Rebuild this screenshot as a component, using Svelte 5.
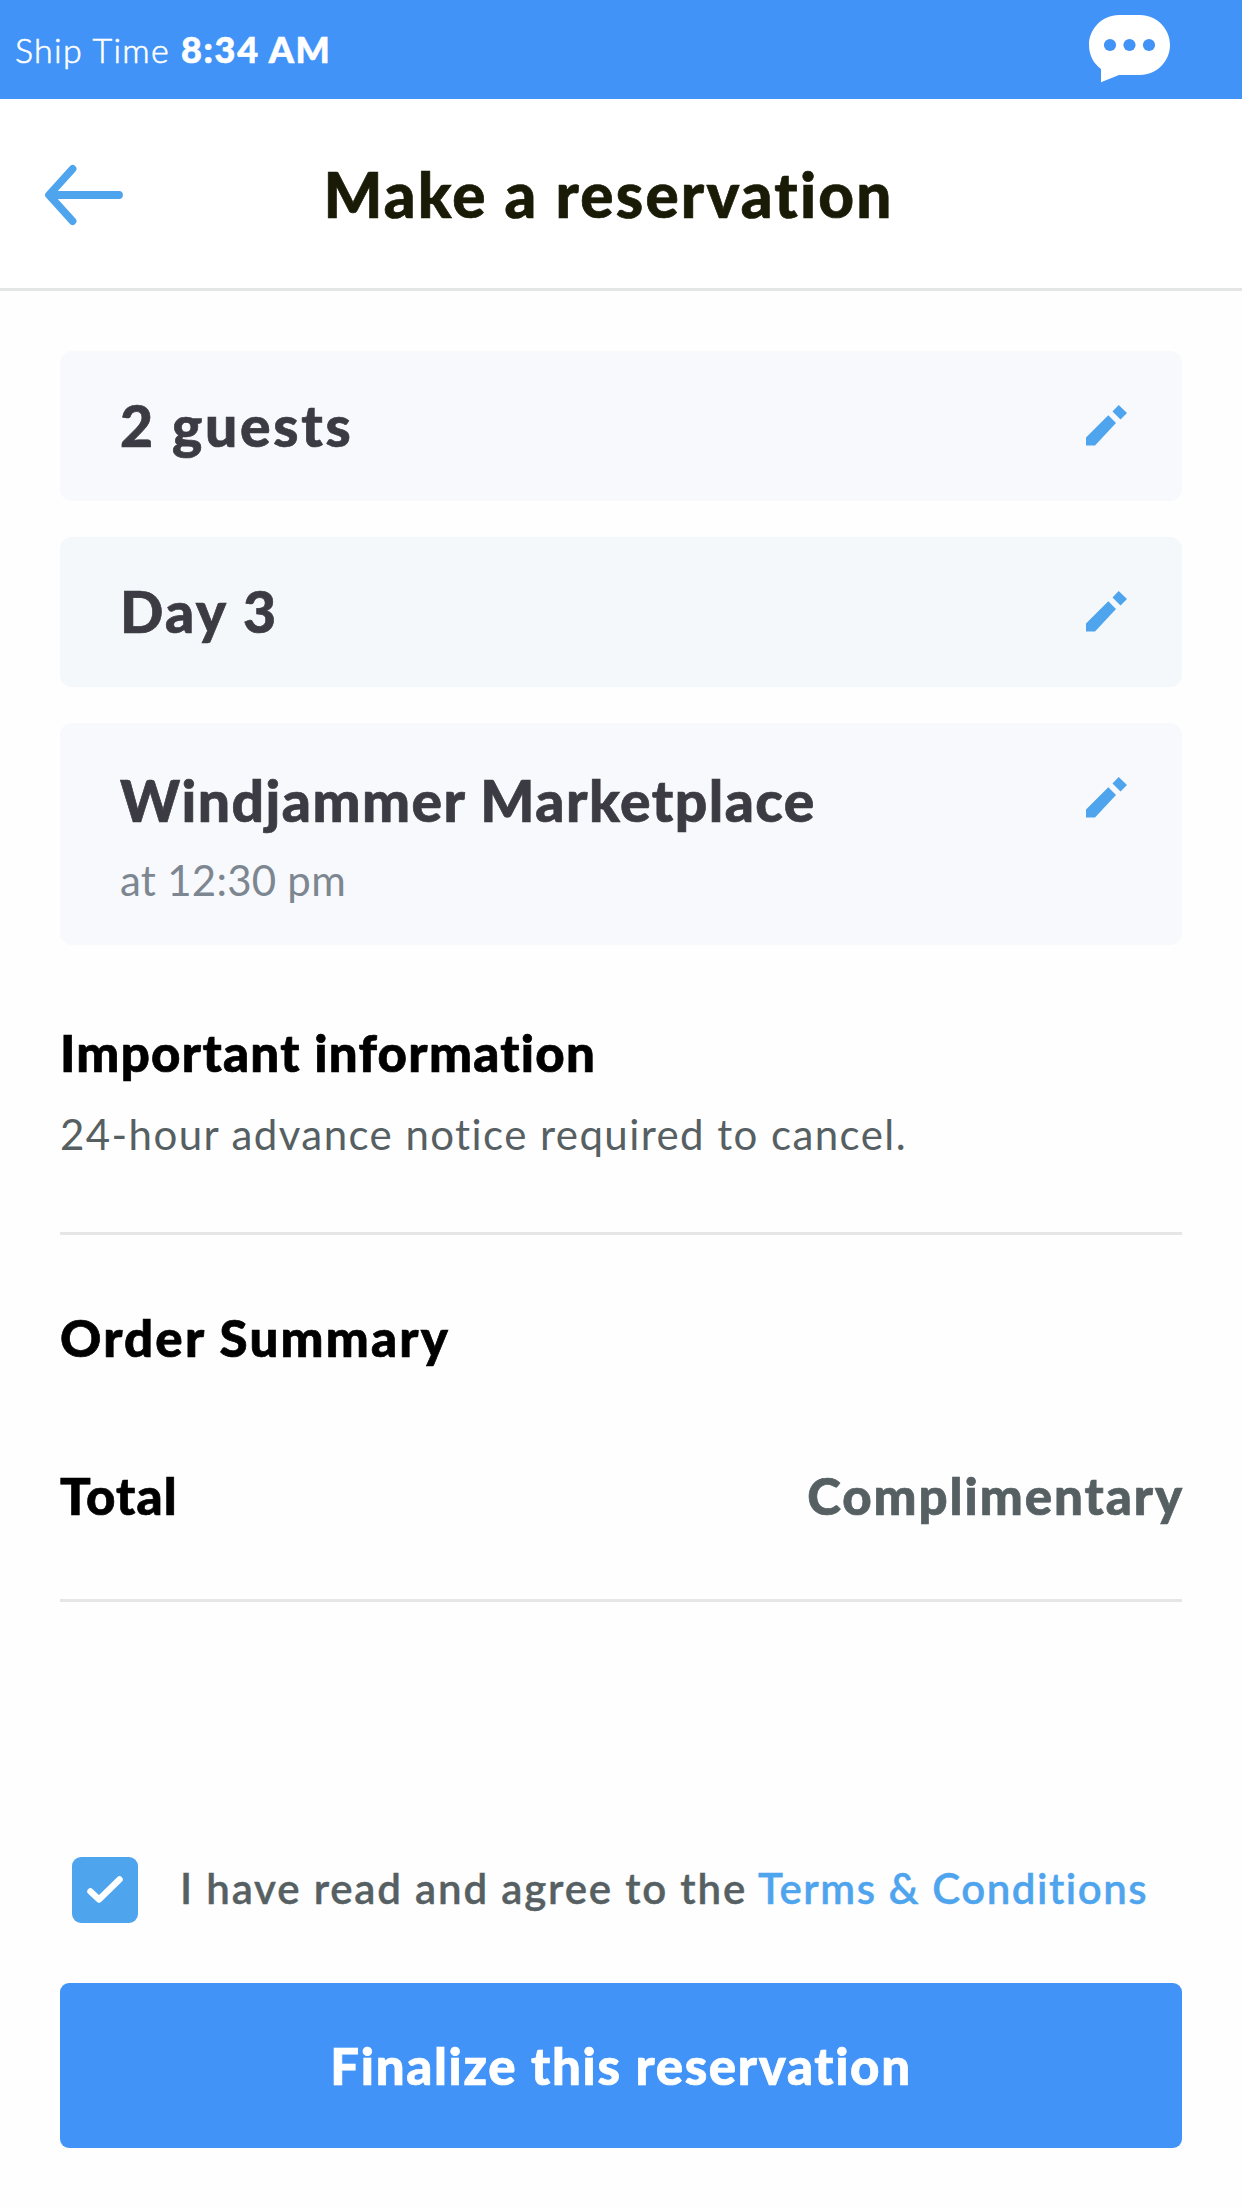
<script>
  const selections = [
    { title: '2 guests', kind: 'guests' },
    { title: 'Day 3', kind: 'day' },
    { title: 'Windjammer Marketplace', detail: 'at 12:30 pm', kind: 'venue' }
  ];
  let agreed = $state(true);
</script>

<div class="screen">
  <div class="status">
    <p class="time"><span class="label">Ship Time</span><b>8:34 AM</b></p>
    <svg class="chat" viewBox="0 0 81 67" aria-label="Messages">
      <path fill="#fff" d="M30 0H51C68 0 81 14 81 30S68 60 51 60H30L12 67.300V54C4.500 48.500 0 40 0 30C0 14 13 0 30 0Z" />
      <g fill="#4293f7">
        <circle cx="21" cy="30" r="6.100" />
        <circle cx="40.500" cy="30" r="6.100" />
        <circle cx="60" cy="30" r="6.100" />
      </g>
    </svg>
  </div>

  <header>
    <button class="back" aria-label="Back">
      <svg viewBox="0 0 78 60">
        <path d="M27.500 4L4 30L27.500 56M5 30H74" fill="none" stroke="#4fa4ee" stroke-width="7.800" stroke-linecap="round" stroke-linejoin="round" />
      </svg>
    </button>
    <h1>Make a reservation</h1>
  </header>

  <main>
    <div class="cards">
      {#each selections as item}
        <section class="card {item.kind}">
          <div>
            <h2>{item.title}</h2>
            {#if item.detail}<p>{item.detail}</p>{/if}
          </div>
          <button class="edit" aria-label="Edit {item.title}">
            <svg viewBox="0 0 41 41">
              <path fill="#4fa4ee" d="M0 32.500L22.300 10.200L30 18L9 40.500H0ZM26.500 6.500L32.700 0L41 8L34.500 14.500Z" />
            </svg>
          </button>
        </section>
      {/each}
    </div>

    <section class="info">
      <h3>Important information</h3>
      <p>24-hour advance notice required to cancel.</p>
    </section>

    <section class="summary">
      <h3>Order Summary</h3>
      <div class="total">
        <strong class="name">Total</strong>
        <strong class="value">Complimentary</strong>
      </div>
    </section>

    <div class="agree">
      <button class="check" role="checkbox" aria-checked={agreed} aria-label="Agree" onclick={() => (agreed = !agreed)}>
        {#if agreed}
          <svg viewBox="0 0 36 27">
            <path d="M3.500 15.500L12 23.500L32.500 3.500" fill="none" stroke="#fff" stroke-width="6.500" stroke-linecap="round" stroke-linejoin="round" />
          </svg>
        {/if}
      </button>
      <span class="text">I have read and agree to the</span>
      <span class="terms">Terms &amp; Conditions</span>
    </div>

    <button class="submit">Finalize this reservation</button>
  </main>
</div>

<style>
  :global(body) { background: #fefefe; }
  .screen { width: 1242px; height: 2208px; background: #fefefe; font-family: Lato, sans-serif; overflow: hidden; }
  h1, h2, h3, p { margin: 0; white-space: nowrap; }
  button { border: 0; padding: 0; margin: 0; background: none; font-family: inherit; }
  svg { display: block; overflow: visible; }
  h1, h2, h3, .total strong, .submit { -webkit-text-stroke: 0.700px currentColor; }

  .status { display: flex; justify-content: space-between; align-items: flex-start; height: 99px; box-sizing: border-box; background: #4293f7; color: #fff; padding: 15px 72px 0 15px; }
  .time { display: flex; align-items: baseline; gap: 11px; line-height: 44px; padding-top: 12px; }
  .label { font-size: 34px; font-weight: 300; letter-spacing: 1.300px; -webkit-text-stroke: 0.600px currentColor; }
  .time b { font-size: 36px; font-weight: 900; letter-spacing: 1.650px; -webkit-text-stroke: 0.600px currentColor; }
  .chat { width: 81px; height: 67px; }

  header { display: flex; align-items: center; height: 189px; padding: 0 148px 0 45px; background: #fff; border-bottom: 3px solid #e4e5e5; }
  .back svg { width: 78px; height: 60px; margin-top: 2px; }
  h1 { flex: 1; text-align: center; color: #191b07; font-size: 62px; line-height: 74px; font-weight: 900; letter-spacing: 2.200px; }

  main { padding: 60px 60px 0; }
  .cards { display: grid; gap: 36px; }
  .card { display: flex; justify-content: space-between; align-items: flex-start; height: 150px; box-sizing: border-box; padding: 41px 55px 0 60px; border-radius: 12px; background: #f8f9fd; }
  .day { background: #f4f8fb; }
  .venue { height: 222px; padding-top: 44px; }
  h2 { color: #3c3b43; font-size: 57px; line-height: 67px; font-weight: 900; }
  .guests h2 { letter-spacing: 2.700px; }
  .day h2 { letter-spacing: 2.400px; }
  .venue h2 { letter-spacing: 1.460px; }
  .card p { margin-top: 21px; color: #7d8791; font-size: 42px; line-height: 50px; letter-spacing: 0.250px; }
  .edit { margin-top: 13px; }
  .venue .edit { margin-top: 10px; }
  .edit svg { width: 41px; height: 41px; }

  h3 { color: #000; font-size: 51px; line-height: 60px; font-weight: 900; }
  .info { padding: 78px 0 73px; border-bottom: 3px solid #e6e6e6; }
  .info h3 { letter-spacing: 1.300px; }
  .info p { margin-top: 26px; color: #566063; font-size: 42px; line-height: 50px; letter-spacing: 1.420px; }
  .summary { padding: 73px 0; border-bottom: 3px solid #e6e6e6; }
  .summary h3 { letter-spacing: 2.200px; }
  .total { display: flex; justify-content: space-between; margin-top: 98px; font-size: 51px; line-height: 60px; }
  .total strong { font-weight: 900; }
  .name { color: #000; letter-spacing: 1.200px; }
  .value { color: #566063; letter-spacing: 1.950px; margin-right: -2px; }

  .agree { display: flex; align-items: center; height: 66px; margin: 255px 0 60px; padding-left: 12px; font-size: 42px; line-height: 50px; font-weight: 600; white-space: nowrap; }
  .check { display: flex; align-items: center; justify-content: center; width: 66px; height: 66px; border-radius: 9px; background: #4fa4ee; }
  .check svg { width: 36px; height: 27px; margin-top: -2px; }
  .agree span { padding-bottom: 4px; -webkit-text-stroke: 0.400px currentColor; }
  .text { margin-left: 42px; color: #566063; letter-spacing: 1.830px; }
  .terms { margin-left: 11px; color: #4fa4ee; letter-spacing: 1.520px; }

  .submit { display: block; width: 100%; height: 165px; border-radius: 9px; background: #4293f7; color: #fff; font-size: 51px; line-height: 60px; font-weight: 900; letter-spacing: 1.650px; }
</style>
